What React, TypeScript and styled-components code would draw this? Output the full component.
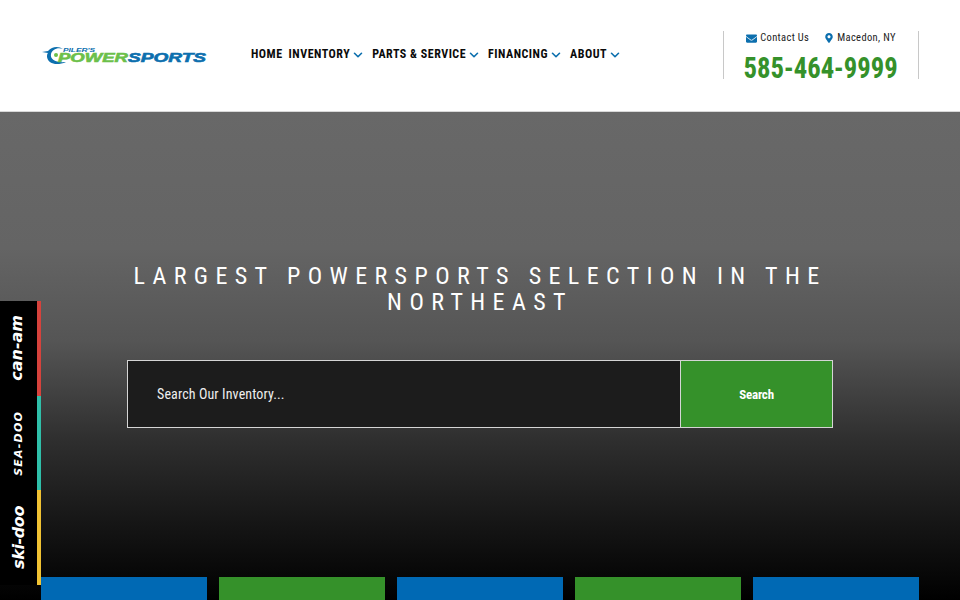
import React from "react";
import styled, { createGlobalStyle } from "styled-components";
import { FaEnvelope, FaMapMarkerAlt } from "react-icons/fa";
import { ChevronDown } from "lucide-react";

const Global = createGlobalStyle`
  html, body { margin: 0; padding: 0; background: #000; }
  * { box-sizing: border-box; }
`;

const Page = styled.div`
  position: relative;
  width: 960px;
  height: 600px;
  overflow: hidden;
  display: flex;
  flex-direction: column;
  font-family: Roboto, "Liberation Sans", sans-serif;
  font-stretch: 75%;
`;

const Header = styled.header`
  flex: none;
  height: 112px;
  background: #fff;
  display: flex;
  align-items: center;
  padding: 0 41px 0 42px;
  border-bottom: 1px solid #d8d8d8;
`;

const LogoBox = styled.svg`
  flex: none;
  width: 166px;
  height: 24px;
  margin-top: -2px;
`;

const Nav = styled.nav`
  display: flex;
  align-items: center;
  gap: 7px;
  margin-left: 43px;
  margin-top: -4px;
`;

const NavItem = styled.a<{ $plain?: boolean }>`
  display: flex;
  align-items: center;
  font-size: 12px;
  font-weight: 700;
  letter-spacing: 0.5px;
  color: #0b0b0b;
  white-space: nowrap;
  margin-right: ${(p) => (p.$plain ? "-1px" : "0")};
  svg { color: #0c6fae; margin: 2px 0 0 1px; }
`;

const Contact = styled.div`
  margin-left: auto;
  width: 196px;
  height: 48px;
  border-left: 1px solid #c8c8c8;
  border-right: 1px solid #c8c8c8;
  display: flex;
  flex-direction: column;
  align-items: center;
  margin-top: -1px;
`;

const ContactRow = styled.div`
  display: flex;
  gap: 15px;
  font-size: 10.5px;
  letter-spacing: 0.35px;
  color: #222;
  line-height: 12px;
  margin-top: 1px;
`;

const ContactLink = styled.span`
  display: flex;
  align-items: center;
  gap: 3px;
  svg { color: #0c6fae; }
`;

const Phone = styled.div`
  font-size: 30px;
  font-weight: 700;
  line-height: 34px;
  color: #35912a;
  white-space: nowrap;
  margin-top: 7px;
  transform: scaleX(0.89);
`;

const Hero = styled.main`
  flex: 1;
  display: flex;
  flex-direction: column;
  align-items: center;
  padding: 151px 41px 0;
  background: linear-gradient(180deg, #686868 0%, #646464 28%, #555 47%, #2f2f2f 67%, #161616 84%, #000 100%);
`;

const Heading = styled.h1`
  margin: 0;
  width: 700px;
  text-align: center;
  font-size: 24px;
  font-weight: 400;
  line-height: 26px;
  letter-spacing: 7.4px;
  color: #fff;
`;

const SearchBar = styled.form`
  display: flex;
  width: 706px;
  height: 68px;
  margin-top: 45px;
  border: 1px solid #d5d5d5;
`;

const SearchField = styled.div`
  flex: 1;
  background: #1c1c1c;
  color: #eee;
  font-size: 14px;
  letter-spacing: 0.12px;
  display: flex;
  align-items: center;
  padding-left: 29px;
`;

const SearchButton = styled.button`
  flex: none;
  width: 152px;
  border: 0;
  border-left: 1px solid #d5d5d5;
  background: #35912a;
  color: #fff;
  font-family: Roboto, "Liberation Sans", sans-serif;
  font-stretch: 75%;
  font-size: 13px;
  font-weight: 700;
  letter-spacing: -0.2px;
`;

const Tiles = styled.div`
  margin-top: auto;
  width: 100%;
  display: grid;
  grid-template-columns: repeat(5, 166px);
  justify-content: space-between;
`;

const Tile = styled.div<{ $green?: boolean }>`
  height: 23px;
  background: ${(p) => (p.$green ? "#35912a" : "#0069b4")};
`;

const BrandRail = styled.aside`
  position: absolute;
  left: 0;
  top: 301px;
  width: 41px;
  height: 284px;
  display: flex;
  flex-direction: column;
`;

const Brand = styled.div<{ $stripe: string; $inset: number }>`
  flex: 1;
  background: #000;
  border-right: 4px solid ${(p) => p.$stripe};
  padding-right: ${(p) => p.$inset}px;
  display: flex;
  align-items: center;
  justify-content: center;
`;

const BrandName = styled.span<{ $size: number; $spacing: number }>`
  writing-mode: vertical-rl;
  transform: rotate(180deg);
  color: #fff;
  font-family: "DejaVu Sans", sans-serif;
  font-stretch: 100%;
  font-size: ${(p) => p.$size}px;
  letter-spacing: ${(p) => p.$spacing}px;
  font-weight: 700;
  font-style: italic;
  white-space: nowrap;
`;

const items = ["HOME", "INVENTORY", "PARTS & SERVICE", "FINANCING", "ABOUT"];

export default function App() {
  return (
    <Page>
      <Global />
      <Header>
        <LogoBox viewBox="0 0 166 24" aria-label="Piler's Powersports">
          <path d="M0 9 L6 8 C10 3 17 3 21 6 C15 4 10 7 9 11 C8 16 13 20 24 19 C15 23 6 21 5 14 C5 12 5 11 6 10 Z" fill="#0c6fae" />
          <circle cx="14" cy="12" r="2" fill="#6cc04a" />
          <text x="21" y="9" fontFamily="Liberation Sans" fontWeight="700" fontStyle="italic" fontSize="6" fill="#0c6fae" textLength="32" lengthAdjust="spacingAndGlyphs">PILER'S</text>
          <text x="16" y="19" fontFamily="Liberation Sans" fontWeight="700" fontStyle="italic" fontSize="13" fill="#6cc04a" textLength="70" lengthAdjust="spacingAndGlyphs" stroke="#6cc04a" strokeWidth="0.6">POWER</text>
          <text x="86" y="19" fontFamily="Liberation Sans" fontWeight="700" fontStyle="italic" fontSize="13" fill="#0c6fae" textLength="78" lengthAdjust="spacingAndGlyphs" stroke="#0c6fae" strokeWidth="0.6">SPORTS</text>
        </LogoBox>
        <Nav>
          {items.map((label) => (
            <NavItem key={label} $plain={label === "HOME"}>
              {label}
              {label !== "HOME" && <ChevronDown size={14} strokeWidth={2.75} />}
            </NavItem>
          ))}
        </Nav>
        <Contact>
          <ContactRow>
            <ContactLink><FaEnvelope size={11} />Contact Us</ContactLink>
            <ContactLink><FaMapMarkerAlt size={10} />Macedon, NY</ContactLink>
          </ContactRow>
          <Phone>585-464-9999</Phone>
        </Contact>
      </Header>
      <Hero>
        <Heading>LARGEST POWERSPORTS SELECTION IN THE NORTHEAST</Heading>
        <SearchBar>
          <SearchField>Search Our Inventory...</SearchField>
          <SearchButton type="button">Search</SearchButton>
        </SearchBar>
        <Tiles>
          <Tile />
          <Tile $green />
          <Tile />
          <Tile $green />
          <Tile />
        </Tiles>
      </Hero>
      <BrandRail>
        <Brand $stripe="#d6423c" $inset={5}><BrandName $size={16} $spacing={0}>can-am</BrandName></Brand>
        <Brand $stripe="#2fbfa9" $inset={0}><BrandName $size={11} $spacing={1.2}>SEA-DOO</BrandName></Brand>
        <Brand $stripe="#f0c233" $inset={0}><BrandName $size={16} $spacing={-0.4}>ski-doo</BrandName></Brand>
      </BrandRail>
    </Page>
  );
}
